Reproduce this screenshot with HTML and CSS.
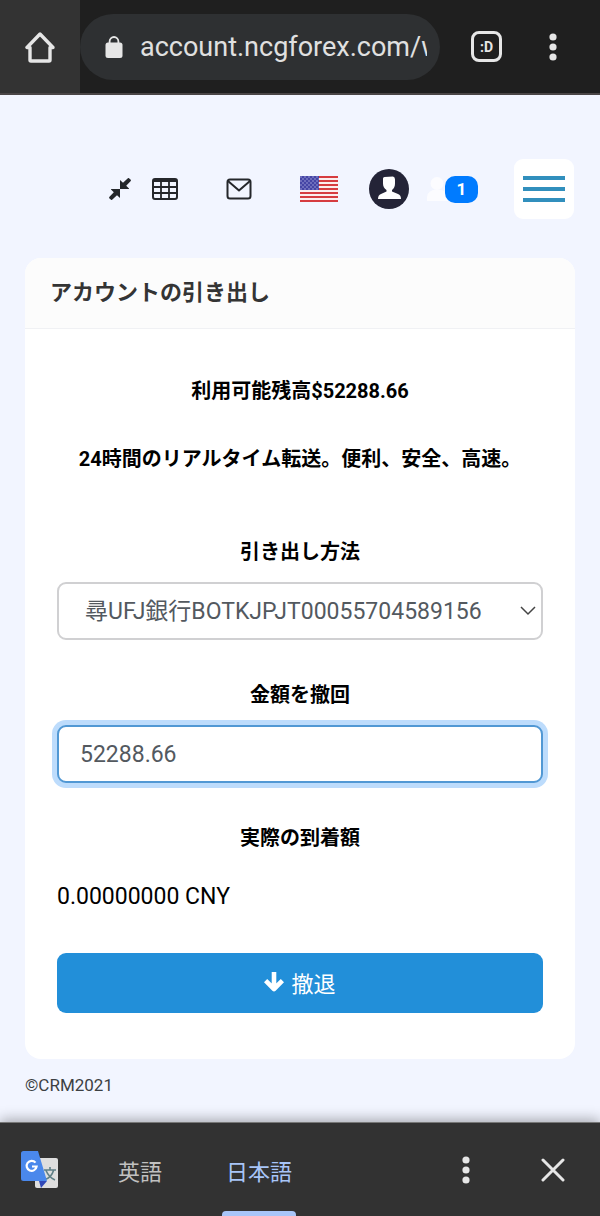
FILE: index.html
```html
<!DOCTYPE html>
<html lang="ja">
<head>
    <meta charset="UTF-8">
    <meta name="viewport" content="width=device-width, initial-scale=1.0">
    <title>アカウントの引き出し</title>
    <link rel="stylesheet" href="styles.css">
</head>
<body>
    <header class="browser-bar">
        <button class="home-button" aria-label="Home">
            <svg width="30" height="32" viewBox="0 0 30 32" fill="none" stroke="#e6e6e6" stroke-width="3.4" stroke-linecap="round" stroke-linejoin="round">
                <path d="M2 16.500h3V29a1 1 0 0 0 1 1h18a1 1 0 0 0 1-1V16.500h3L15 3z"/>
            </svg>
        </button>
        <div class="address">
            <svg width="18" height="22" viewBox="0 0 18 22">
                <path d="M4.600 8V5.400a4.400 4.400 0 0 1 8.800 0V8" fill="none" stroke="#e6e6e6" stroke-width="1.800"/>
                <rect x="0.500" y="6.500" width="17" height="15.500" rx="2.500" fill="#e6e6e6"/>
            </svg>
            <input class="address-input" type="text" aria-label="URL" value="account.ncgforex.com/w" readonly>
        </div>
        <button class="tabs-button" aria-label="Tabs">:D</button>
        <button class="dots-button" aria-label="Menu">
            <svg width="8" height="28" viewBox="0 0 8 28" fill="#e6e6e6">
                <circle cx="4" cy="4" r="3.600"/><circle cx="4" cy="14" r="3.600"/><circle cx="4" cy="24" r="3.600"/>
            </svg>
        </button>
    </header>

    <main>
        <nav class="toolbar">
            <a href="#" class="compress-link" aria-label="Compress">
                <svg width="22" height="22" viewBox="0 0 22 22" fill="#25272b">
                    <path d="M11 11V2l3 2.800L18.600.400a1.200 1.200 0 0 1 1.700 0l1.200 1.200a1.200 1.200 0 0 1 0 1.700L17.200 7.700 20 10.500V11z"/>
                    <path d="M11 11v9l-3-2.800-4.600 4.400a1.200 1.200 0 0 1-1.700 0L.500 20.400a1.200 1.200 0 0 1 0-1.700L4.800 14.300 2 11.500V11z"/>
                </svg>
            </a>
            <a href="#" class="table-link" aria-label="Table">
                <svg width="26" height="22" viewBox="0 0 26 22" fill="none" stroke="#25272b">
                    <rect x="1" y="1" width="24" height="20" rx="2" stroke-width="2"/>
                    <path d="M1.500 2.500h23" stroke-width="3"/>
                    <path d="M1 9h24M1 15h24M9 3v18M17 3v18" stroke-width="1.800"/>
                </svg>
            </a>
            <a href="#" class="mail-link" aria-label="Mail">
                <svg width="26" height="22" viewBox="0 0 26 22" fill="none" stroke="#25272b" stroke-width="2" stroke-linejoin="round">
                    <rect x="1.500" y="1.500" width="23" height="19" rx="2.500"/>
                    <path d="M2 3l11 9.500L24 3"/>
                </svg>
            </a>
            <a href="#" class="flag-link" aria-label="English">
                <svg width="38" height="26" viewBox="0 0 38 26">
                    <defs>
                        <pattern id="stars" width="4" height="4" patternUnits="userSpaceOnUse">
                            <rect width="4" height="4" fill="#4545a5"/>
                            <circle cx="1" cy="1" r="0.700" fill="#b5b5e5"/><circle cx="3" cy="3" r="0.700" fill="#b5b5e5"/>
                        </pattern>
                    </defs>
                    <rect width="38" height="26" fill="#fbeeee"/>
                    <path d="M0 1h38M0 5h38M0 9h38M0 13h38M0 17h38M0 21h38M0 25h38" stroke="#d63c40" stroke-width="2"/>
                    <rect width="19" height="14" fill="url(#stars)"/>
                </svg>
            </a>
            <a href="#" class="avatar-link" aria-label="Profile">
                <svg width="40" height="40" viewBox="0 0 40 40">
                    <circle cx="20" cy="20" r="20" fill="#242437"/>
                    <path d="M14 9.500Q14 8 15.500 8l8.500-.5q2 .3 2 3v4q0 4-3 6.500v1.500l6 2.500q3 1.200 3 5H9q0-3.800 3-5l5.500-2.500V21Q14 18.500 14 14.500z" fill="#fff"/>
                </svg>
            </a>
            <a href="#" class="users-link" aria-label="Users">
                <svg width="24" height="24" viewBox="0 0 24 24" fill="#fcfcff">
                    <circle cx="11" cy="6.500" r="6.500"/>
                    <path d="M1 24q-1-9 6-11h9q6 2 6 11z"/>
                </svg>
                <span class="badge">1</span>
            </a>
            <button class="menu-button" aria-label="Navigation">
                <span></span><span></span><span></span>
            </button>
        </nav>

        <section class="card">
            <h1 class="card-header">アカウントの引き出し</h1>
            <form class="card-body">
                <p class="note">利用可能残高$52288.66</p>
                <p class="note">24時間のリアルタイム転送。便利、安全、高速。</p>

                <div class="form-group">
                    <label for="method">引き出し方法</label>
                    <select id="method" class="form-control">
                        <option>尋UFJ銀行BOTKJPJT00055704589156</option>
                    </select>
                </div>

                <div class="form-group">
                    <label for="amount">金額を撤回</label>
                    <input id="amount" class="form-control active" type="text" inputmode="decimal" value="52288.66">
                </div>

                <div class="form-group">
                    <label for="arrival">実際の到着額</label>
                    <output id="arrival" class="arrival">0.00000000 CNY</output>
                </div>

                <button type="button" class="submit-button">
                    <svg width="20" height="20" viewBox="0 0 20 20" fill="none" stroke="#fff" stroke-width="4.600" stroke-linejoin="round">
                        <path d="M10 0v16M1.600 8.600l8.400 8.400 8.400-8.400"/>
                    </svg>
                    撤退
                </button>
            </form>
        </section>

        <footer>©CRM2021</footer>
    </main>

    <div class="translate-bar">
        <svg class="translate-logo" width="38" height="38" viewBox="0 0 38 38">
            <rect x="14" y="7" width="23" height="30" rx="2" fill="#dedede"/>
            <path d="M18 30h8l-6 7z" fill="#3048b8"/>
            <path d="M23 19h12M29 16v3M25 19.500q3 7 9 9.500M32.500 19.500q-2 7-8.500 9" fill="none" stroke="#5f7f86" stroke-width="1.600"/>
            <path d="M2.500 0H17l9 30H2.500A2.500 2.500 0 0 1 0 27.500v-25A2.500 2.500 0 0 1 2.500 0z" fill="#4a88ec"/>
            <path d="M14.500 11.600A5 5 0 1 0 15.600 15.500H11" fill="none" stroke="#fff" stroke-width="2.200"/>
        </svg>
        <button class="lang">英語</button>
        <button class="lang selected">日本語</button>
        <button class="options-button" aria-label="Options">
            <svg width="8" height="28" viewBox="0 0 8 28" fill="#e6e6e6">
                <circle cx="4" cy="4" r="3.600"/><circle cx="4" cy="14" r="3.600"/><circle cx="4" cy="24" r="3.600"/>
            </svg>
        </button>
        <button class="close-button" aria-label="Close">
            <svg width="24" height="24" viewBox="0 0 24 24" stroke="#e6e6e6" stroke-width="3" stroke-linecap="round">
                <path d="M2 2l20 20M22 2L2 22"/>
            </svg>
        </button>
    </div>
</body>
</html>
```

FILE: styles.css
```css
* {
    margin: 0;
    padding: 0;
    box-sizing: border-box;
}

body {
    min-height: 100vh;
    display: flex;
    flex-direction: column;
    font-family: Roboto, "Noto Sans CJK JP", sans-serif;
    background-color: #f2f5ff;
    color: #000;
}

button {
    border: none;
    background: none;
    font-family: inherit;
    cursor: pointer;
}

svg {
    display: block;
    flex-shrink: 0;
}

/* Browser bar */
.browser-bar {
    display: flex;
    align-items: center;
    height: 95px;
    background-color: #1f1f1f;
    border-bottom: 2px solid #4a4546;
}

.home-button {
    display: flex;
    align-items: center;
    justify-content: center;
    width: 80px;
    height: 100%;
    background-color: #333;
}

.address {
    flex: 1;
    min-width: 0;
    display: flex;
    align-items: center;
    gap: 17px;
    height: 66px;
    padding: 0 13px 0 25px;
    border-radius: 33px;
    background-color: #2e3032;
}

.address-input {
    flex: 1;
    min-width: 0;
    border: none;
    outline: none;
    background: none;
    color: #e0e0e0;
    font-family: inherit;
    font-size: 27px;
}

.tabs-button {
    width: 31px;
    height: 31px;
    margin-left: 31px;
    border: 3px solid #e6e6e6;
    border-radius: 8px;
    color: #e6e6e6;
    font-size: 14px;
    font-weight: bold;
}

.dots-button {
    margin: 0 43px 0 47px;
}

/* Page */
main {
    padding: 64px 25px 24px;
}

.toolbar {
    display: flex;
    align-items: center;
    justify-content: flex-end;
    margin-bottom: 39px;
    padding-right: 1px;
}

.table-link {
    margin-left: 21px;
}

.mail-link {
    margin-left: 48px;
}

.flag-link {
    margin-left: 48px;
}

.avatar-link {
    margin-left: 31px;
}

.users-link {
    display: flex;
    align-items: center;
    margin-left: 17px;
    text-decoration: none;
}

.badge {
    width: 33px;
    margin-left: -5px;
    border-radius: 10px;
    background-color: #007bff;
    color: white;
    font-size: 17px;
    font-weight: bold;
    line-height: 27px;
    text-align: center;
}

.menu-button {
    display: flex;
    flex-direction: column;
    justify-content: center;
    gap: 7px;
    width: 60px;
    height: 60px;
    margin-left: 36px;
    padding: 0 9px;
    border-radius: 9px;
    background-color: white;
}

.menu-button span {
    height: 4px;
    background-color: #318fbd;
}

.card {
    border-radius: 16px;
    background-color: white;
    overflow: hidden;
}

.card-header {
    padding: 18px 25px 19px;
    border-bottom: 1px solid #f0f1f4;
    background-color: #fcfcfc;
    color: #343434;
    font-size: 22px;
    font-weight: bold;
    line-height: 33px;
}

.card-body {
    padding: 47px 32px 46px;
}

.note {
    margin-bottom: 38px;
    font-size: 20px;
    font-weight: bold;
    line-height: 30px;
    text-align: center;
}

.form-group {
    margin-bottom: 40px;
}

.form-group:last-of-type {
    margin-bottom: 27px;
}

.note + .form-group {
    margin-top: 63px;
}

label {
    display: block;
    margin-bottom: 15px;
    font-size: 20px;
    font-weight: bold;
    line-height: 30px;
    text-align: center;
}

.form-control {
    display: block;
    width: 100%;
    height: 58px;
    padding: 0 21px;
    border: 2px solid #d0d0d2;
    border-radius: 9px;
    outline: none;
    background-color: white;
    color: #53595f;
    font-family: inherit;
    font-size: 23px;
}

select.form-control {
    padding: 0 26px;
    appearance: none;
    background: white url("data:image/svg+xml,%3Csvg xmlns='http://www.w3.org/2000/svg' width='16' height='10' fill='none' stroke='%23444' stroke-width='1.500'%3E%3Cpath d='M1 1l7 7 7-7'/%3E%3C/svg%3E") no-repeat right 5px center;
}

.form-control.active {
    border-color: #5198d4;
    box-shadow: 0 0 0 5px #bddcfc;
}

.arrival {
    display: block;
    font-size: 23px;
    line-height: 58px;
}

.submit-button {
    display: flex;
    align-items: center;
    justify-content: center;
    gap: 7px;
    width: 100%;
    height: 60px;
    padding-bottom: 2px;
    border-radius: 9px;
    background-color: #228fd9;
    color: white;
    font-size: 22px;
}

footer {
    margin-top: 14px;
    color: #3c3f43;
    font-size: 17px;
    line-height: 24px;
}

/* Translate bar */
.translate-bar {
    display: flex;
    align-items: center;
    height: 94px;
    margin-top: auto;
    border-top: 1px solid #777;
    background-color: #323232;
    box-shadow: 0 -3px 12px rgba(0, 0, 0, 0.3);
}

.translate-logo {
    margin: 0 48px 0 21px;
}

.lang {
    height: 100%;
    padding: 0 11px;
    color: #c0c0c0;
    font-size: 22px;
}

.lang.selected {
    position: relative;
    margin-left: 42px;
    color: #a8c5f8;
}

.lang.selected::after {
    content: "";
    position: absolute;
    left: 7px;
    right: 7px;
    bottom: 0;
    height: 5px;
    border-radius: 4px 4px 0 0;
    background-color: #a8c5f8;
}

.options-button {
    margin-left: auto;
}

.close-button {
    margin: 0 35px 0 71px;
}
```
